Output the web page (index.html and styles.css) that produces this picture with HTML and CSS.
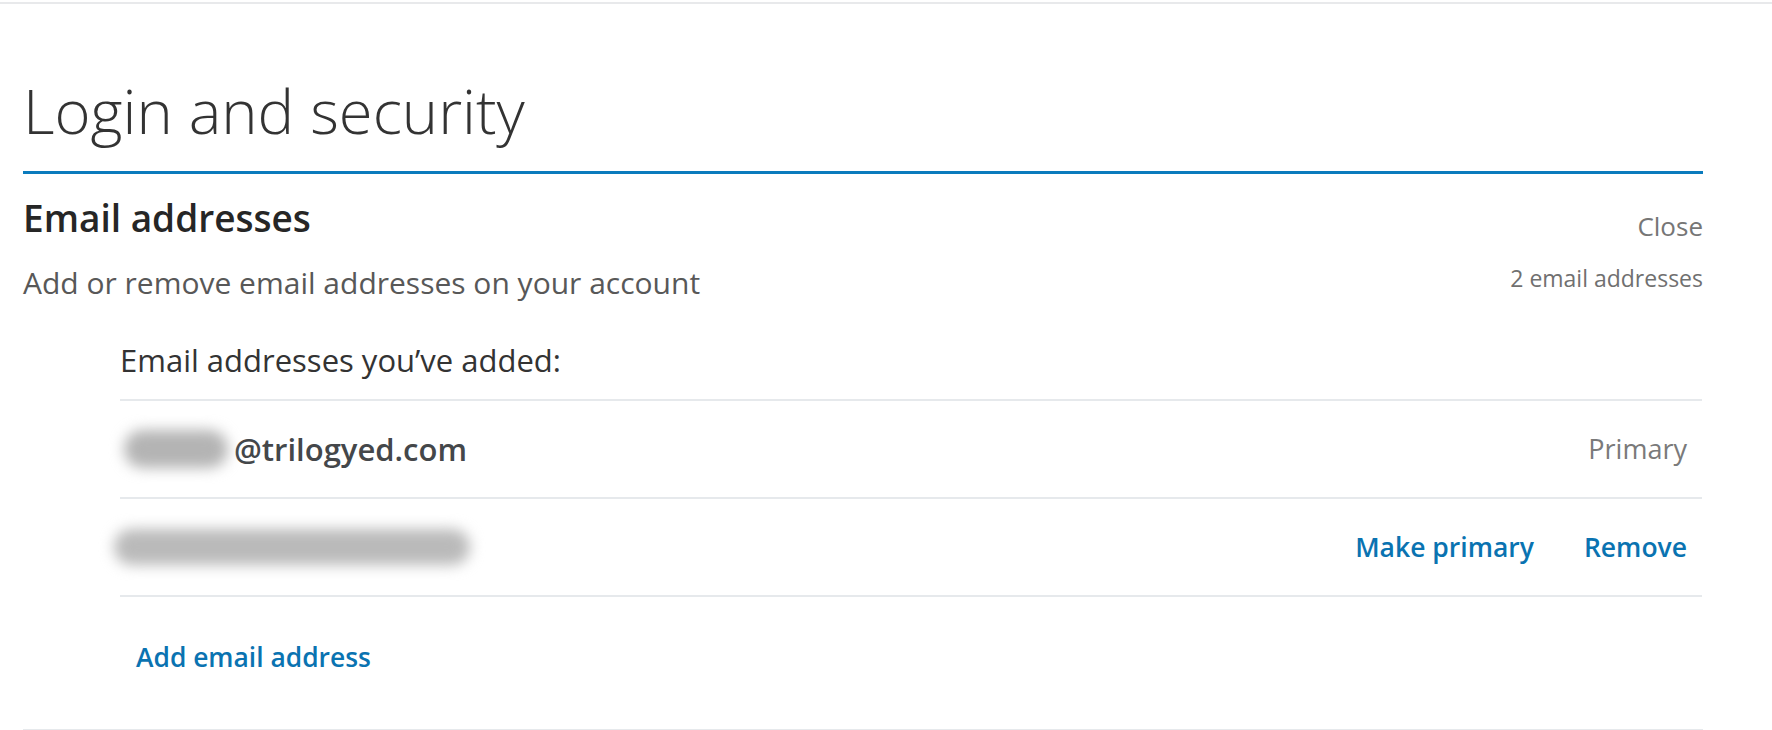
FILE: index.html
```html
<!DOCTYPE html>
<html lang="en">
<head>
<meta charset="utf-8">
<title>Login and security</title>
<link rel="stylesheet" href="styles.css">
</head>
<body>
<div class="topline"></div>
<main class="page">
  <h1 class="page-title">Login and security</h1>
  <section class="section">
    <div class="section-head">
      <h2 class="section-title">Email addresses</h2>
      <a class="close" href="#">Close</a>
    </div>
    <div class="section-sub">
      <p class="section-desc">Add or remove email addresses on your account</p>
      <span class="count">2 email addresses</span>
    </div>
    <div class="email-list">
      <p class="list-label">Email addresses you’ve added:</p>
      <div class="email-row">
        <div class="email">
          <span class="blur blur-short" aria-hidden="true"></span><span class="email-text">@trilogyed.com</span>
        </div>
        <span class="primary-tag">Primary</span>
      </div>
      <div class="email-row">
        <div class="email">
          <span class="blur blur-long" aria-hidden="true"></span>
        </div>
        <div class="actions">
          <a class="link" href="#">Make primary</a>
          <a class="link" href="#">Remove</a>
        </div>
      </div>
      <div class="add-row">
        <a class="link link-add" href="#">Add email address</a>
      </div>
    </div>
  </section>
</main>
</body>
</html>
```
FILE: styles.css
```css
html, body {
  margin: 0;
  padding: 0;
  background: #ffffff;
}

body {
  font-family: "Open Sans", "Noto Sans", sans-serif;
  color: #333333;
}

.topline {
  height: 2px;
  margin-top: 2px;
  background: #e8e9eb;
}

.page {
  margin-left: 23px;
  width: 1680px;
}

.page-title {
  margin: 71px 0 0;
  padding-bottom: 26px;
  font-size: 61.5px;
  line-height: 70px;
  font-weight: 300;
  color: #333333;
  border-bottom: 3px solid #0a7bbd;
}

.section {
  border-bottom: 2px solid #e6e9ec;
}

.section-head {
  display: flex;
  justify-content: space-between;
  align-items: flex-end;
  margin-top: 24px;
}

.section-title {
  margin: 0;
  font-size: 37px;
  line-height: 40px;
  font-weight: 600;
  color: #262626;
}

.close {
  font-size: 26px;
  line-height: 24px;
  color: #767676;
  text-decoration: none;
}

.section-sub {
  display: flex;
  justify-content: space-between;
  align-items: flex-start;
  margin-top: 25px;
}

.section-desc {
  margin: 0;
  font-size: 30px;
  line-height: 40px;
  color: #585858;
}

.count {
  margin-top: 4px;
  font-size: 23px;
  line-height: 22px;
  color: #707070;
}

.email-list {
  margin: 0 1px 0 97px;
}

.list-label {
  margin: 37px 0 19px;
  font-size: 31px;
  line-height: 40px;
  color: #333333;
}

.email-row {
  display: flex;
  justify-content: space-between;
  align-items: center;
  height: 96px;
  padding-right: 15px;
  border-top: 2px solid #e6e9ec;
}

.email-row + .email-row {
  border-bottom: 2px solid #e6e9ec;
}

.email {
  display: flex;
  align-items: center;
}

.blur {
  display: inline-block;
  background: #b4b4b4;
  border-radius: 20px;
  filter: blur(7px);
}

.blur-short {
  width: 104px;
  height: 38px;
  margin-left: 4px;
  margin-right: 6px;
}

.blur-long {
  width: 356px;
  height: 36px;
  margin-left: -6px;
  background: #bababa;
}

.email-text {
  font-size: 31px;
  line-height: 40px;
  font-weight: 600;
  color: #44474a;
}

.primary-tag {
  font-size: 27px;
  line-height: 40px;
  color: #7a7a7a;
}

.actions {
  display: flex;
  gap: 50px;
}

.link {
  font-size: 26.5px;
  line-height: 40px;
  font-weight: 600;
  color: #0a73b1;
  text-decoration: none;
}

.add-row {
  display: flex;
  margin: 40px 0 52px;
  padding-left: 16px;
}

.link-add {
  font-size: 26.4px;
}
```
